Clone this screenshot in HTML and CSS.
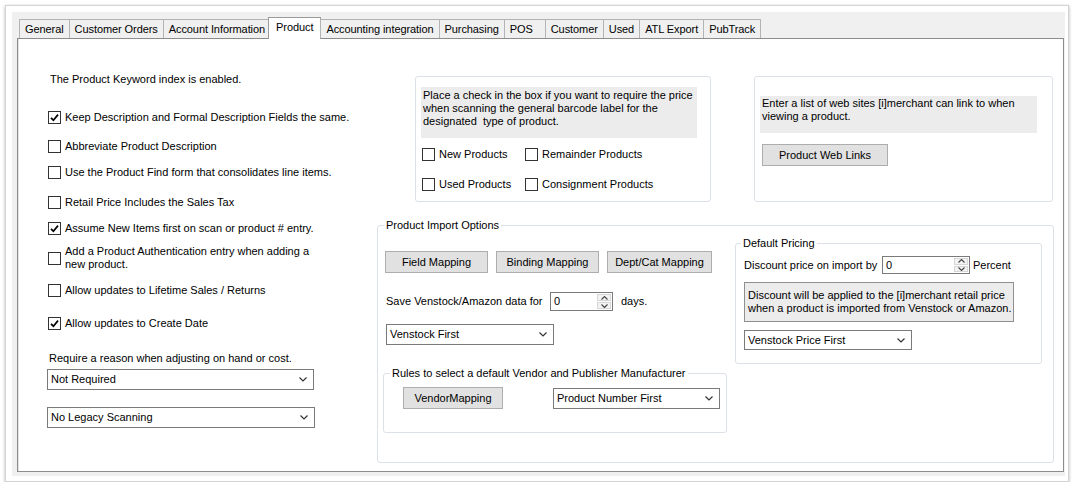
FILE: index.html
```html
<!DOCTYPE html>
<html lang="en">
<head>
  <meta charset="UTF-8" />
  <title>Options - Product</title>
  <link rel="stylesheet" href="styles.css">
</head>
<body>

  <div class="window">
    <div class="form">

      <!-- tab strip -->
      <div class="tabs">
        <div class="tab">General</div>
        <div class="tab">Customer Orders</div>
        <div class="tab">Account Information</div>
        <div class="tab active">Product</div>
        <div class="tab">Accounting integration</div>
        <div class="tab">Purchasing</div>
        <div class="tab pos">POS</div>
        <div class="tab">Customer</div>
        <div class="tab">Used</div>
        <div class="tab">ATL Export</div>
        <div class="tab">PubTrack</div>
      </div>

      <div class="panel">

        <!-- left column: product flags -->
        <div class="left">
          <p class="note">The Product Keyword index is enabled.</p>

          <div class="check mt-25">
            <span class="box"><svg viewBox="0 0 11 11"><path d="M2 5.8 L4.4 8.2 L9 2.6" /></svg></span>
            <span>Keep Description and Formal Description Fields the same.</span>
          </div>
          <div class="check mt-16">
            <span class="box"></span>
            <span>Abbreviate Product Description</span>
          </div>
          <div class="check mt-13">
            <span class="box"></span>
            <span>Use the Product Find form that consolidates line items.</span>
          </div>
          <div class="check mt-17">
            <span class="box"></span>
            <span>Retail Price Includes the Sales Tax</span>
          </div>
          <div class="check mt-13">
            <span class="box"><svg viewBox="0 0 11 11"><path d="M2 5.8 L4.4 8.2 L9 2.6" /></svg></span>
            <span>Assume New Items first on scan or product # entry.</span>
          </div>
          <div class="check two-line mt-10">
            <span class="box"></span>
            <span>Add a Product Authentication entry when adding a<br>new product.</span>
          </div>
          <div class="check mt-13">
            <span class="box"></span>
            <span>Allow updates to Lifetime Sales / Returns</span>
          </div>
          <div class="check mt-20">
            <span class="box"><svg viewBox="0 0 11 11"><path d="M2 5.8 L4.4 8.2 L9 2.6" /></svg></span>
            <span>Allow updates to Create Date</span>
          </div>

          <p class="field-label">Require a reason when adjusting on hand or cost.</p>
          <div class="combo reason">
            <span>Not Required</span>
            <svg class="chev" viewBox="0 0 8 5"><path d="M0.5 0.5 L4 4 L7.5 0.5" /></svg>
          </div>
          <div class="combo legacy">
            <span>No Legacy Scanning</span>
            <svg class="chev" viewBox="0 0 8 5"><path d="M0.5 0.5 L4 4 L7.5 0.5" /></svg>
          </div>
        </div>

        <!-- right side -->
        <div class="right">
          <div class="top-row">
            <div class="card price-req">
              <div class="hint">Place a check in the box if you want to require the price when scanning the general barcode label for the designated&nbsp; type of product.</div>
              <div class="opts">
                <div class="check"><span class="box"></span><span>New Products</span></div>
                <div class="check"><span class="box"></span><span>Remainder Products</span></div>
                <div class="check"><span class="box"></span><span>Used Products</span></div>
                <div class="check"><span class="box"></span><span>Consignment Products</span></div>
              </div>
            </div>

            <div class="card links">
              <div class="hint">Enter a list of web sites [i]merchant can link to when viewing a product.</div>
              <div class="btn web-btn">Product Web Links</div>
            </div>
          </div>

          <fieldset class="group import">
            <legend>Product Import Options</legend>
            <div class="import-body">
              <div class="import-main">
                <div class="btn-row">
                  <div class="btn map-btn">Field Mapping</div>
                  <div class="btn map-btn">Binding Mapping</div>
                  <div class="btn map-btn wide">Dept/Cat Mapping</div>
                </div>

                <div class="save-row">
                  <span class="save-label">Save Venstock/Amazon data for</span>
                  <div class="spin days">
                    <span class="spin-val">0</span>
                    <span class="spin-btns">
                      <span><svg viewBox="0 0 7 4"><path d="M0.5 3.5 L3.5 0.5 L6.5 3.5" /></svg></span>
                      <span><svg viewBox="0 0 7 4"><path d="M0.5 0.5 L3.5 3.5 L6.5 0.5" /></svg></span>
                    </span>
                  </div>
                  <span class="days-label">days.</span>
                </div>

                <div class="combo source">
                  <span>Venstock First</span>
                  <svg class="chev" viewBox="0 0 8 5"><path d="M0.5 0.5 L4 4 L7.5 0.5" /></svg>
                </div>

                <fieldset class="group rules">
                  <legend>Rules to select a default Vendor and Publisher Manufacturer</legend>
                  <div class="rules-body">
                    <div class="btn vendor-btn">VendorMapping</div>
                    <div class="combo rule-combo">
                      <span>Product Number First</span>
                      <svg class="chev" viewBox="0 0 8 5"><path d="M0.5 0.5 L4 4 L7.5 0.5" /></svg>
                    </div>
                  </div>
                </fieldset>
              </div>

              <fieldset class="group pricing">
                <legend>Default Pricing</legend>
                <div class="discount-row">
                  <span class="discount-label">Discount price on import by</span>
                  <div class="spin pct">
                    <span class="spin-val">0</span>
                    <span class="spin-btns">
                      <span><svg viewBox="0 0 7 4"><path d="M0.5 3.5 L3.5 0.5 L6.5 3.5" /></svg></span>
                      <span><svg viewBox="0 0 7 4"><path d="M0.5 0.5 L3.5 3.5 L6.5 0.5" /></svg></span>
                    </span>
                  </div>
                  <span class="pct-label">Percent</span>
                </div>
                <div class="price-note">Discount will be applied to the [i]merchant retail price<br>when a product is imported from Venstock or Amazon.</div>
                <div class="combo price-combo">
                  <span>Venstock Price First</span>
                  <svg class="chev" viewBox="0 0 8 5"><path d="M0.5 0.5 L4 4 L7.5 0.5" /></svg>
                </div>
              </fieldset>
            </div>
          </fieldset>
        </div>

      </div>
    </div>
  </div>

</body>
</html>
```

FILE: styles.css
```css
* {
  box-sizing: border-box;
}
body {
  margin: 0;
  background: #fff;
  font-family: "Liberation Sans", Arial, sans-serif;
  font-size: 11px;
  line-height: 13px;
  color: #000;
}
p {
  margin: 0;
}

/* outer window frame */
.window {
  margin: 5px 6px 0 5px;
  height: 477px;
  border: 1px solid #d4d4d4;
  padding: 6px 3px 5px 6px;
  background: #fff;
  box-shadow: 0 1px 3px rgba(0,0,0,0.3);
}
.form {
  height: 100%;
  background: #f0f0f0;
  padding: 7px 1px 4px 5px;
  display: flex;
  flex-direction: column;
}

/* tabs */
.tabs {
  display: flex;
  align-items: flex-end;
  height: 19px;
  padding-left: 2px;
  position: relative;
  z-index: 1;
}
.tab {
  height: 19px;
  padding: 0 5px;
  margin-right: -1px;
  border: 1px solid #b4b4b4;
  border-bottom: none;
  background: #f0f0f0;
  line-height: 18px;
  letter-spacing: -0.08px;
  white-space: nowrap;
}
.tab.pos {
  min-width: 42px;
}
.tab.active {
  height: 22px;
  margin: 0 -1px -1px -2px;
  padding: 0 7px;
  background: #fff;
  border-color: #9a9a9a;
  line-height: 19px;
}

.panel {
  flex: 1;
  display: flex;
  background: #fff;
  border: 1px solid #8c8c8c;
  box-shadow: inset 1px 0 #e3e3e3;
}

/* left column */
.left {
  width: 359px;
  flex-shrink: 0;
  padding: 34px 0 0 29px;
}
.note {
  margin-left: 3px;
}
.check {
  display: flex;
  align-items: center;
  gap: 4px;
  height: 13px;
  margin-left: 1px;
  white-space: nowrap;
}
.check.two-line {
  height: 26px;
}
.box {
  width: 13px;
  height: 13px;
  flex-shrink: 0;
  border: 1px solid #333;
  background: #fff;
}
.box svg {
  display: block;
  width: 11px;
  height: 11px;
  fill: none;
  stroke: #000;
  stroke-width: 1.7;
}
.mt-10 { margin-top: 10px; }
.mt-13 { margin-top: 13px; }
.mt-16 { margin-top: 16px; }
.mt-17 { margin-top: 17px; }
.mt-20 { margin-top: 20px; }
.mt-25 { margin-top: 25px; }

.field-label {
  margin-top: 22px;
  margin-left: 2px;
}

/* combo boxes */
.combo {
  display: flex;
  align-items: center;
  justify-content: space-between;
  height: 21px;
  padding: 0 6px 0 3px;
  border: 1px solid #7a7a7a;
  background: #fff;
  white-space: nowrap;
}
.chev {
  width: 8px;
  height: 5px;
  fill: none;
  stroke: #333;
  stroke-width: 1.2;
}
.combo.reason {
  width: 267px;
  margin-top: 4px;
}
.combo.legacy {
  width: 268px;
  margin-top: 17px;
}

/* right side */
.right {
  flex: 1;
  display: flex;
  flex-direction: column;
  padding: 37px 9px 0 0;
}
.top-row {
  display: flex;
  gap: 43px;
  padding-left: 38px;
}
.card {
  height: 126px;
  border: 1px solid #dce1e7;
  border-radius: 3px;
}
.hint {
  background: #ececec;
}
.card.price-req {
  width: 296px;
  padding: 10px 0 0 5px;
}
.price-req .hint {
  width: 276px;
  height: 51px;
  padding: 2px 4px 0 2px;
}
.opts {
  display: grid;
  grid-template-columns: 103px auto;
  row-gap: 17px;
  margin: 10px 0 0 1px;
}
.opts .check {
  margin-left: 0;
}
.card.links {
  width: 299px;
  padding: 19px 0 0 5px;
}
.links .hint {
  width: 277px;
  height: 37px;
  padding: 1px 6px 0 2px;
}

/* buttons */
.btn {
  display: flex;
  align-items: center;
  justify-content: center;
  height: 22px;
  background: #e1e1e1;
  border: 1px solid #adadad;
  white-space: nowrap;
}
.web-btn {
  width: 126px;
  margin: 11px 0 0 2px;
}

/* group boxes */
.group {
  margin: 0;
  padding: 0;
  min-width: 0;
  border: 1px solid #dce1e7;
  border-radius: 3px;
}
.group legend {
  padding: 0 2px;
  margin-left: 6px;
  line-height: 13px;
}
.import {
  margin-top: 17px;
  height: 244px;
}
.import-body {
  display: flex;
}
.import-main {
  width: 357px;
  padding-left: 8px;
}
.btn-row {
  display: flex;
  gap: 8px;
  margin: 19px 0 0 -1px;
}
.map-btn {
  width: 103px;
}
.map-btn.wide {
  width: 105px;
}
.save-row {
  display: flex;
  align-items: center;
  margin-top: 19px;
}
.save-label {
  width: 164px;
}
.days-label {
  margin-left: 8px;
}

/* numeric spinners */
.spin {
  display: flex;
  border: 1px solid #7a7a7a;
  background: #fff;
}
.spin.days {
  width: 63px;
  height: 19px;
}
.spin.pct {
  width: 88px;
  height: 18px;
}
.spin-val {
  flex: 1;
  padding-left: 3px;
  line-height: 16px;
}
.spin-btns {
  width: 16px;
  display: flex;
  flex-direction: column;
  gap: 1px;
  padding: 1px;
}
.spin-btns span {
  flex: 1;
  display: flex;
  align-items: center;
  justify-content: center;
  background: #f3f3f3;
  border: 1px solid #d6d6d6;
}
.spin-btns svg {
  width: 7px;
  height: 4px;
  fill: none;
  stroke: #444;
  stroke-width: 1.1;
}

.combo.source {
  width: 168px;
  margin-top: 13px;
}
.rules {
  width: 344px;
  height: 66px;
  margin: 22px 0 0 -3px;
}
.rules-body {
  display: flex;
  padding: 7px 0 0 19px;
}
.vendor-btn {
  width: 100px;
}
.combo.rule-combo {
  width: 167px;
  height: 21px;
  margin: 1px 0 0 50px;
}

.pricing {
  width: 307px;
  height: 127px;
  margin-top: 5px;
  padding: 0 0 0 8px;
}
.pricing legend {
  margin-left: -3px;
}
.discount-row {
  display: flex;
  align-items: center;
  margin-top: 6px;
}
.discount-label {
  width: 138px;
}
.pct-label {
  margin-left: 3px;
}
.price-note {
  width: 270px;
  height: 40px;
  margin-top: 8px;
  padding: 6px 2px 0 3px;
  background: #ececec;
  border: 1px solid #8f8f8f;
  white-space: nowrap;
  overflow: hidden;
}
.combo.price-combo {
  width: 168px;
  height: 20px;
  margin-top: 8px;
}
```
